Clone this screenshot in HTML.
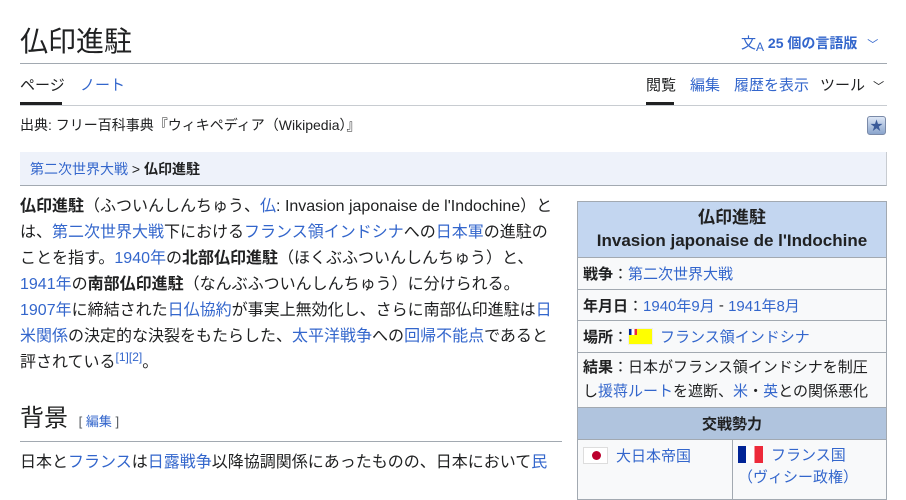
<!DOCTYPE html>
<html><head><meta charset="utf-8"><style>
*{margin:0;padding:0;box-sizing:border-box}
body{width:906px;height:473px;overflow:hidden;background:#fff;font-family:"Liberation Sans","Noto Sans CJK JP",sans-serif;color:#202122;position:relative}
.a{position:absolute;white-space:nowrap}
a,.l{color:#3366cc;text-decoration:none}
.line{position:absolute;left:20px;font-size:16px;white-space:nowrap;height:26px;line-height:26px}
b{font-weight:bold}
.ib{position:absolute;left:577px;top:201px;width:310px;border:1px solid #a2a9b1;background:#f8f9fa;font-size:15px}
.ib .r{border-top:1px solid #a2a9b1;padding:0 5px;display:flex;align-items:center;white-space:nowrap}
</style></head><body>
<div class="a" style="left:20px;top:22px;font-size:28px;line-height:40px">仏印進駐</div>
<div class="a l" style="left:741px;top:33px;font-size:14px;font-weight:bold;line-height:20px"><span style="font-weight:normal;font-size:15px">文<span style="font-size:12px;position:relative;top:3px">A</span></span> 25 個の言語版 <span style="font-weight:normal;margin-left:6px;font-size:11px">﹀</span></div>
<div class="a" style="left:20px;top:63px;width:867px;height:1px;background:#a2a9b1"></div>
<div class="a" style="left:20px;top:76px;font-size:15px;line-height:20px">ページ</div>
<div class="a l" style="left:80px;top:76px;font-size:15px;line-height:20px">ノート</div>
<div class="a" style="left:20px;top:102px;width:42px;height:3px;background:#202122"></div>
<div class="a" style="left:20px;top:105px;width:867px;height:1px;background:#c8ccd1"></div>
<div class="a" style="left:646px;top:76px;font-size:15px;line-height:20px">閲覧</div>
<div class="a" style="left:646px;top:102px;width:28px;height:3px;background:#202122"></div>
<div class="a l" style="left:690px;top:76px;font-size:15px;line-height:20px">編集</div>
<div class="a l" style="left:734px;top:76px;font-size:15px;line-height:20px">履歴を表示</div>
<div class="a" style="left:820px;top:76px;font-size:15px;line-height:20px">ツール <span style="font-size:11px;margin-left:4px">﹀</span></div>
<div class="a" style="left:20px;top:115px;font-size:14px;line-height:20px">出典: フリー百科事典『ウィキペディア（Wikipedia）』</div>
<div class="a" style="left:867px;top:116px;width:19px;height:19px;border:1px solid #7a8aa8;border-radius:3px;background:linear-gradient(#dce6f5,#8aa4cc);color:#3a5a99;font-size:13px;line-height:17px;text-align:center">★</div>
<div class="a" style="left:20px;top:152px;width:867px;height:34px;background:#eef2fa;border-bottom:1px solid #a2a9b1;border-right:1px solid #c8ccd1"></div>
<div class="a" style="left:30px;top:159px;font-size:14px;line-height:20px"><a>第二次世界大戦</a> &gt; <b>仏印進駐</b></div>

<div class="line" style="top:194px"><b>仏印進駐</b>（ふついんしんちゅう、<a>仏</a>: Invasion japonaise de l'Indochine）と</div>
<div class="line" style="top:220px">は、<a>第二次世界大戦</a>下における<a>フランス領インドシナ</a>への<a>日本軍</a>の進駐の</div>
<div class="line" style="top:246px">ことを指す。<a>1940年</a>の<b>北部仏印進駐</b>（ほくぶふついんしんちゅう）と、</div>
<div class="line" style="top:272px"><a>1941年</a>の<b>南部仏印進駐</b>（なんぶふついんしんちゅう）に分けられる。</div>
<div class="line" style="top:298px"><a>1907年</a>に締結された<a>日仏協約</a>が事実上無効化し、さらに南部仏印進駐は<a>日</a></div>
<div class="line" style="top:324px"><a>米関係</a>の決定的な決裂をもたらした、<a>太平洋戦争</a>への<a>回帰不能点</a>であると</div>
<div class="line" style="top:350px">評されている<span style="font-size:12px;color:#3366cc;position:relative;top:-6px;line-height:0">[1][2]</span>。</div>
<div class="a" style="left:20px;top:403px;font-size:24px;line-height:32px">背景 <span style="font-size:13px;color:#54595d;margin-left:4px">[ <a>編集</a> ]</span></div>
<div class="a" style="left:20px;top:441px;width:542px;height:1px;background:#a2a9b1"></div>
<div class="line" style="top:450px">日本と<a>フランス</a>は<a>日露戦争</a>以降協調関係にあったものの、日本において<a>民</a></div>

<div class="ib">
<div style="background:#c3d6f0;text-align:center;font-weight:bold;font-size:17px;line-height:23px;height:55px;padding-top:4px">仏印進駐<br>Invasion japonaise de l'Indochine</div>
<div class="r" style="height:32px"><b>戦争</b>：<a>第二次世界大戦</a></div>
<div class="r" style="height:31px"><b>年月日</b>：<a>1940年9月</a>&nbsp;-&nbsp;<a>1941年8月</a></div>
<div class="r" style="height:32px"><b>場所</b>：<span style="display:inline-block;width:25px;height:17px;background:#ff0;position:relative;margin-right:7px;border:1px solid #eee"><span style="position:absolute;left:0;top:0;width:8px;height:6px;background:linear-gradient(90deg,#002395 33%,#fff 33% 66%,#ed2939 66%)"></span></span><a>フランス領インドシナ</a></div>
<div class="r" style="height:55px;white-space:normal;line-height:24px;display:block;padding-top:3px"><b>結果</b>：日本がフランス領インドシナを制圧し<a>援蒋ルート</a>を遮断、<a>米</a>・<a>英</a>との関係悪化</div>
<div class="r" style="height:32px;background:#b0c4de;justify-content:center;font-weight:bold">交戦勢力</div>
<div class="r" style="height:60px;padding:0;align-items:flex-start">
<div style="width:155px;padding:5px;border-right:1px solid #a2a9b1;height:60px;display:flex;align-items:flex-start"><span style="display:inline-block;width:25px;height:17px;border:1px solid #ddd;background:#fff;position:relative;margin-right:8px;margin-top:2px"><span style="position:absolute;left:8px;top:3px;width:9px;height:9px;border-radius:50%;background:#bc002d"></span></span><a>大日本帝国</a></div>
<div style="padding:5px;line-height:22px"><span style="display:inline-block;width:25px;height:17px;background:linear-gradient(90deg,#002395 33%,#fff 33% 66%,#ed2939 66%);margin-right:8px;vertical-align:-3px"></span><a>フランス国</a><br><a>（ヴィシー政権）</a></div>
</div>
</div>
</body></html>
